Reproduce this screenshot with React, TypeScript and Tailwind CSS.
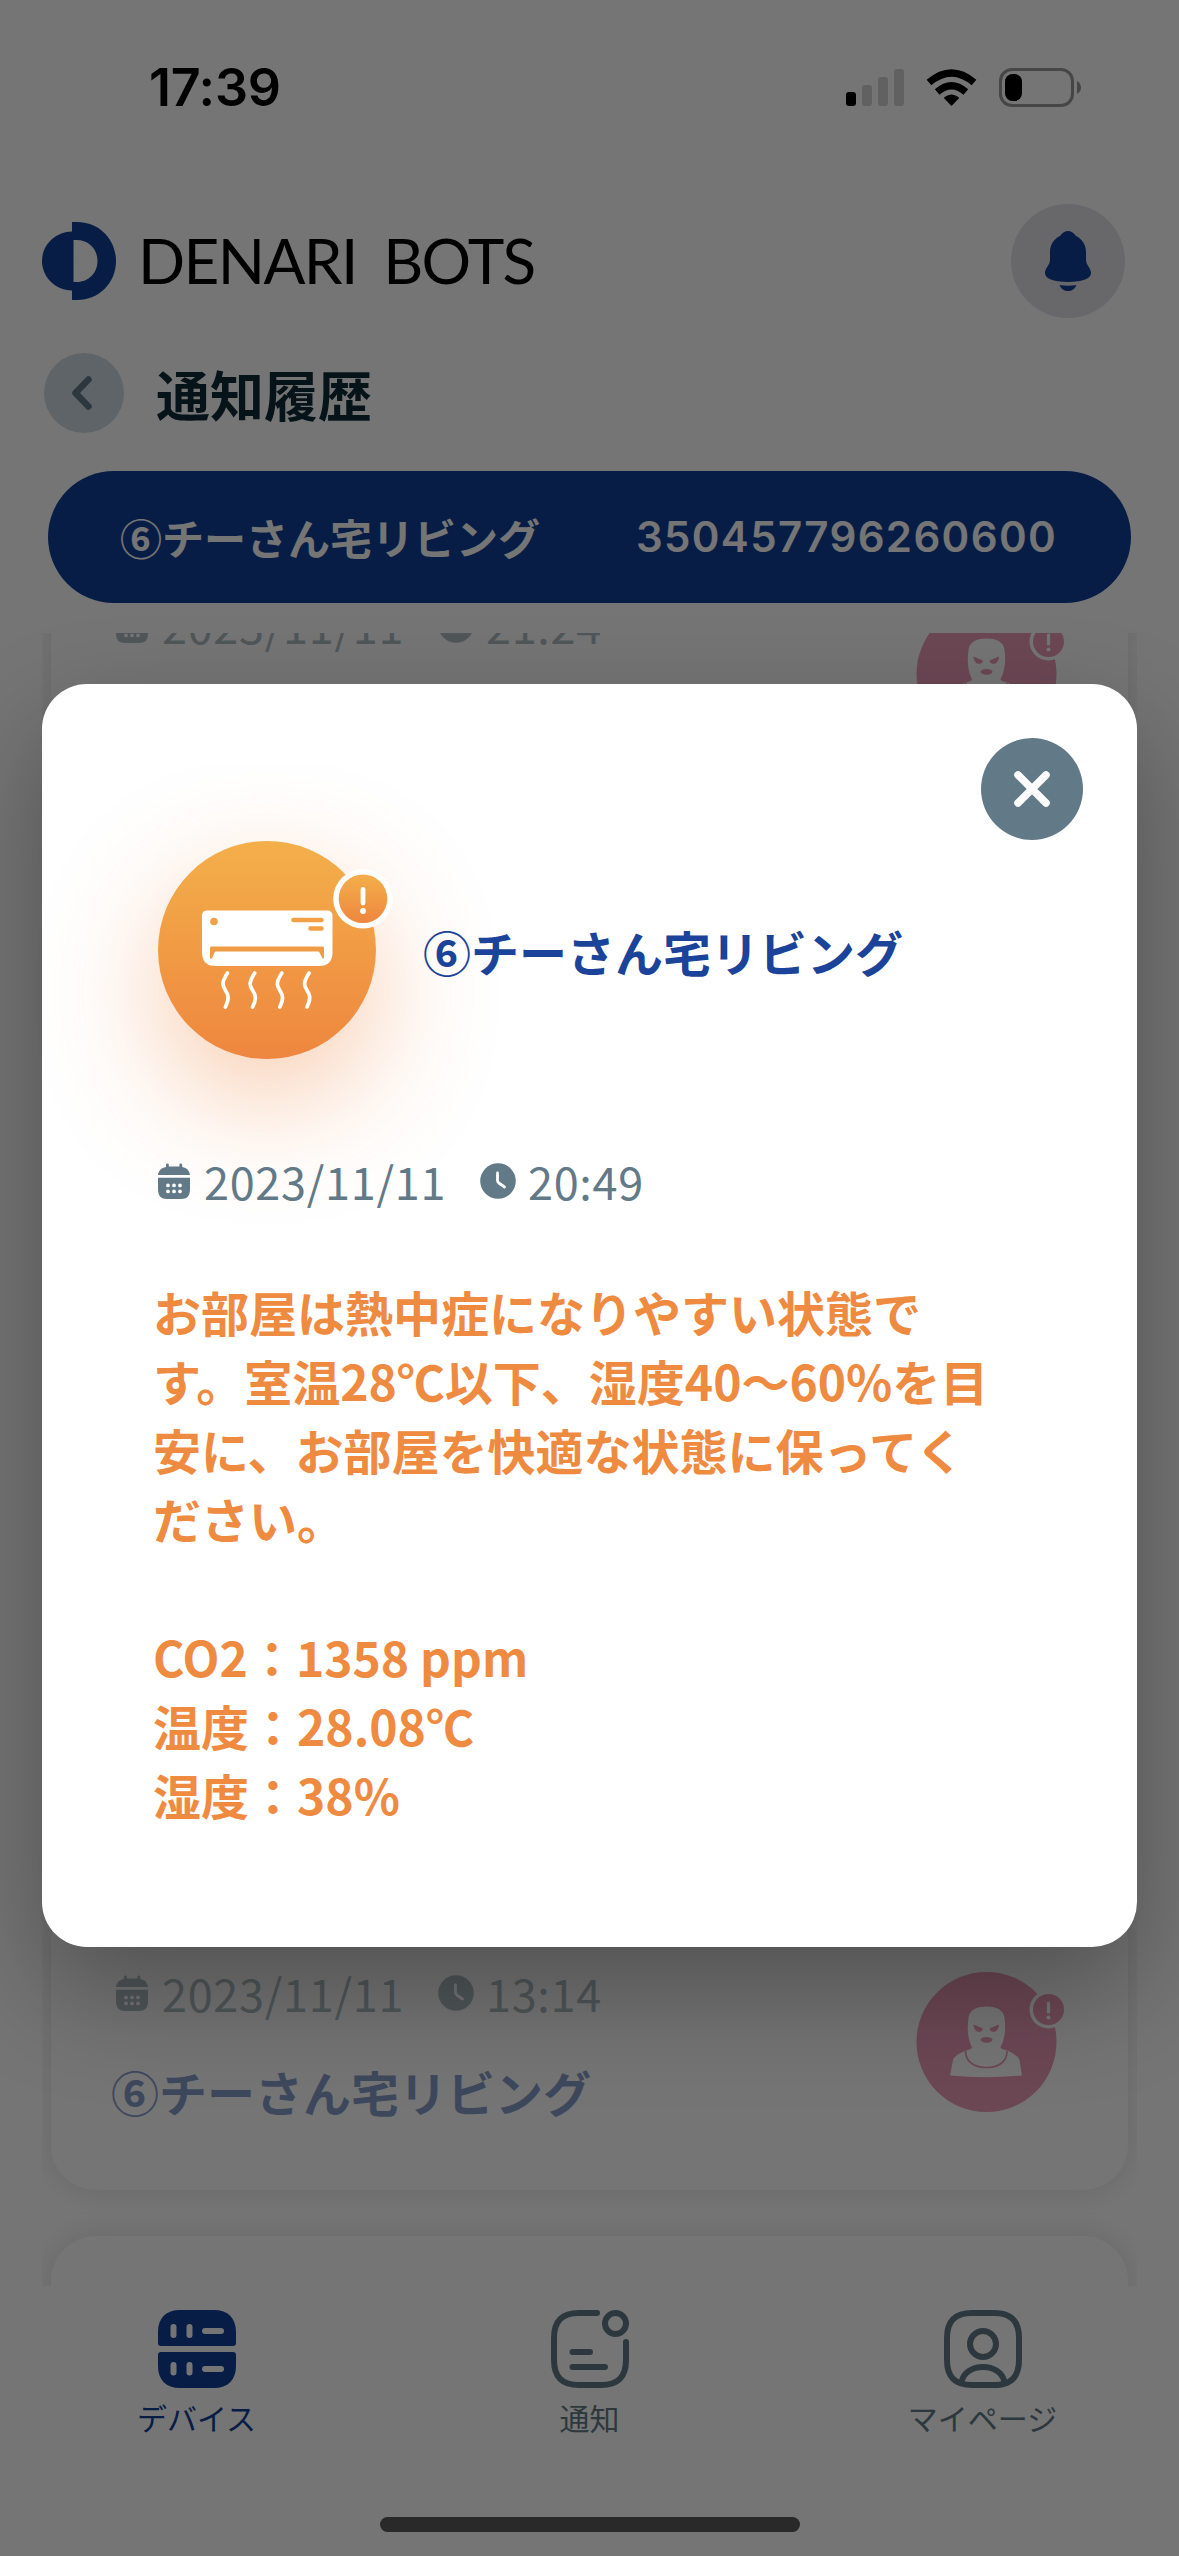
import React from "react";

const CalendarIcon = () => (
  <svg className="h-9 w-8 shrink-0" viewBox="0 0 32 36" fill="#627a88">
    <path d="M8 4V1.8a1.4 1.4 0 0 1 2.8 0V3.6H21.4V1.8a1.4 1.4 0 0 1 2.8 0V4C29 4.8 31.6 8 32 12H0C.4 8 3.200 4.800 8 4Z" />
    <path
      fillRule="evenodd"
      d="M0 14.8H32V26C32 33 29 36 23 36H9C3 36 0 33 0 26ZM10 20.500a1.900 1.900 0 1 0 0 3.800a1.900 1.900 0 1 0 0-3.800ZM16 20.500a1.900 1.900 0 1 0 0 3.800a1.900 1.900 0 1 0 0-3.800ZM22 20.500a1.900 1.900 0 1 0 0 3.800a1.900 1.900 0 1 0 0-3.800ZM10 26.500a1.900 1.900 0 1 0 0 3.800a1.900 1.900 0 1 0 0-3.800ZM16 26.500a1.900 1.900 0 1 0 0 3.800a1.900 1.900 0 1 0 0-3.800ZM22 26.500a1.900 1.900 0 1 0 0 3.800a1.900 1.900 0 1 0 0-3.800Z"
    />
  </svg>
);

const ClockIcon = () => (
  <svg className="size-9 shrink-0" viewBox="0 0 36 36">
    <circle cx="18" cy="18" r="17.800" fill="#627a88" />
    <path d="M17.500 10V17.500Q17.500 19 18.800 20L24.500 24" fill="none" stroke="#fff" strokeWidth="2.800" strokeLinecap="round" />
  </svg>
);

const DateRow = ({ date, time }: { date: string; time: string }) => (
  <div className="flex h-[66px] items-center whitespace-nowrap text-[45px] leading-[66px] tracking-[0.700px] text-[#627a88]">
    <CalendarIcon />
    <span className="-mt-[1px] ml-[14px] w-[276px]">{date}</span>
    <ClockIcon />
    <span className="-mt-[1px] ml-3">{time}</span>
  </div>
);

const IntruderIcon = () => (
  <svg className="h-[140px] w-[151px] overflow-visible" viewBox="0 0 151 140">
    <circle cx="70.500" cy="70" r="70" fill="#d93a72" />
    <g fill="#fff">
      <path d="M70.500 34.500C80 34.500 87.500 37.500 88.500 46C90 57 89 66 84.500 75.500Q85 77 91 78.500C97 81 102 84 103.500 88L106 103.500Q70 107 34 103.500L37 88C38 84 44 81 50 78.500Q56 77 56 75.500C51.500 66 51 57 52.500 46C53.500 37.500 61 34.500 70.500 34.500Z" />
    </g>
    <path d="M49.500 79C49.500 91 60 95.500 70.500 95.500S91 91 91 79" fill="none" stroke="#d93a72" strokeWidth="1.700" />
    <g fill="#d93a72">
      <path d="M57.500 52.500L67 56.500C66 61.500 58 61.500 57.500 52.500ZM83 52.500L73.500 56.500C74.500 61.500 82.500 61.500 83 52.500Z" />
      <ellipse cx="70.500" cy="67.800" rx="6" ry="2.900" />
    </g>
    <circle cx="132.500" cy="37.500" r="19" fill="#fff" />
    <circle cx="132.500" cy="37.500" r="15.500" fill="#d93a72" />
    <path d="M132.500 31V40" stroke="#fff" strokeWidth="3.200" strokeLinecap="round" />
    <circle cx="132.500" cy="45.500" r="2" fill="#fff" />
  </svg>
);

const Card = ({ date, time, name }: { date: string; time: string; name: string }) => (
  <div className="h-[296px] shrink-0 rounded-[45px] bg-white pl-[65px] pr-[61px] shadow-[0_0_30px_rgba(0,0,0,0.12)]">
    <div className="flex h-full items-start justify-between opacity-50">
      <div className="pt-[66px]">
        <DateRow date={date} time={time} />
        <p className="-ml-[5px] mt-[30px] h-[70px] text-[48px] font-bold leading-[70px] text-[#113f98]">{name}</p>
      </div>
      <div className="pt-[78px]">
        <IntruderIcon />
      </div>
    </div>
  </div>
);

const StatusBar = () => (
  <header className="flex h-[174px] items-start justify-between pl-[149px] pr-[98px] pt-[68px]">
    <span className="h-10 font-['Inter'] text-[52px] font-semibold leading-[39px] tracking-[-0.300px]">17:39</span>
    <div className="flex items-start">
      <svg className="h-10 w-[58px]" viewBox="0 0 58 40">
        <rect y="24" width="10" height="14" rx="3" />
        <g fill="#d3d3d3">
          <rect x="16" y="17" width="10" height="21" rx="3" />
          <rect x="32" y="9" width="10" height="29" rx="3" />
          <rect x="48" y="1" width="10" height="37" rx="3" />
        </g>
      </svg>
      <svg className="ml-[22px] h-10 w-[51px]" viewBox="0 0 51 40">
        <path d="M25.500 38L18.300 30.600Q17.800 29.800 18.600 29.100Q25.500 24 32.400 29.100Q33.200 29.800 32.700 30.600Z" />
        <path d="M11.200 24Q25.500 11.500 39.800 24" fill="none" stroke="#000" strokeWidth="7.200" />
        <path d="M3 14.500Q25.500 -4.500 48 14.500" fill="none" stroke="#000" strokeWidth="7.200" />
      </svg>
      <svg className="ml-[22px] h-10 w-[82px]" viewBox="0 0 82 40">
        <rect x="1.500" y="1.500" width="72" height="36" rx="11.500" fill="none" stroke="#999" strokeWidth="3" />
        <rect x="6" y="6" width="17" height="27" rx="7.500" />
        <path d="M78 13Q82 15.500 82 19.500T78 26Z" fill="#999" />
      </svg>
    </div>
  </header>
);

const NavItem = ({ label, active, children }: { label: string; active?: boolean; children: React.ReactNode }) => (
  <div className={active ? "flex flex-1 flex-col items-center text-[#113f98]" : "flex flex-1 flex-col items-center text-[#627a88]"}>
    <svg className="size-[78px]" viewBox="0 0 78 78" fill="none" stroke="currentColor" strokeWidth="6" strokeLinecap="round">
      {children}
    </svg>
    <span className="mt-[7px] text-[30px] leading-[44px]">{label}</span>
  </div>
);

export default function App() {
  return (
    <div className="relative flex h-[2556px] w-[1179px] flex-col overflow-hidden bg-white font-['Noto_Sans_CJK_JP',sans-serif] text-black">
      <StatusBar />

      <div className="flex h-[174px] items-center justify-between pl-[42px] pr-[54px]">
        <div className="flex items-center">
          <svg className="h-[78px] w-[74px]" viewBox="0 0 74 78" fill="#113f98">
            <path
              fillRule="evenodd"
              d="M30 0H35C57 0 74 17 74 39S57 78 35 78H30V68.500C13 68 0 55 0 39S13 10 30 9.500ZM31.500 18V60H35C46.500 60 55.500 51 55.500 39S46.500 18 35 18Z"
            />
          </svg>
          <span className="-mt-[2px] ml-[22px] whitespace-nowrap font-['Lato'] text-[62px] leading-[78px] tracking-[-1.600px] [word-spacing:12px]">DENARI BOTS</span>
        </div>
        <div className="flex size-[114px] items-center justify-center rounded-full bg-[#e2e2e6]">
          <svg className="h-[60px] w-[46px]" viewBox="0 0 46 60" fill="#113f98">
            <path d="M23 0C26 0 28.500 1.500 30.500 4.500C37 8 41 13.500 41 21V29C41 34 46 37 46 42C46 47.500 38 51 23 51S0 47.500 0 42C0 37 5 34 5 29V21C5 13.500 9 8 15.500 4.500C17.500 1.500 20 0 23 0Z" />
            <path d="M14.500 54Q23 55.500 31.500 54Q29 60 23 60T14.500 54Z" />
          </svg>
        </div>
      </div>

      <div className="flex h-[123px] items-start pl-[44px] pt-[5px]">
        <div className="flex size-20 items-center justify-center rounded-full bg-[#cddae0]">
          <svg className="-ml-1 h-[34px] w-5" viewBox="0 0 20 34" fill="none" stroke="#627a88" strokeWidth="6.500" strokeLinecap="round" strokeLinejoin="round">
            <path d="M16.500 3.500L3.500 17L16.500 30.500" />
          </svg>
        </div>
        <h1 className="ml-8 mt-[1px] text-[54px] font-bold leading-[80px] text-[#0f2a38]">通知履歴</h1>
      </div>

      <div className="mx-12 flex h-[132px] shrink-0 items-center justify-between rounded-full bg-[#113f98] pl-[72px] pr-[74px] text-white">
        <span className="text-[42px] font-bold leading-[62px]">⑥チーさん宅リビング</span>
        <span className="-mt-[1px] font-['Inter'] text-[42px] font-semibold leading-[50px] tracking-[1.350px]">350457796260600</span>
      </div>

      <main className="mx-[42px] mt-[30px] flex h-[1653px] shrink-0 flex-col overflow-hidden px-[9px]">
        <div className="-mt-[107px] flex flex-col gap-[46px]">
          <Card date="2023/11/11" time="21:24" name="⑥チーさん宅リビング" />
          <div className="h-[980px] shrink-0" />
          <Card date="2023/11/11" time="13:14" name="⑥チーさん宅リビング" />
          <div className="h-[296px] shrink-0 rounded-[45px] bg-white shadow-[0_0_30px_rgba(0,0,0,0.12)]" />
        </div>
      </main>

      <nav className="flex h-[231px] shrink-0 pt-6">
        <NavItem label="デバイス" active>
          <path
            fill="currentColor"
            stroke="none"
            fillRule="evenodd"
            d="M0 33V22C0 8 8 0 22 0H56C70 0 78 8 78 22V33Q78 36 75 36H3Q0 36 0 33ZM0 45V56C0 70 8 78 22 78H56C70 78 78 70 78 56V45Q78 42 75 42H3Q0 42 0 45Z"
          />
          <path stroke="#fff" d="M15.500 17V25M31.500 17V25M47 21H63M15.500 55V62.500M31.500 55V62.500M47 59H63" />
        </NavItem>
        <NavItem label="通知">
          <path d="M46 3H28C11 3 3 11 3 28V50C3 67 11 75 28 75H50C67 75 75 67 75 50V32" />
          <circle cx="64.500" cy="13.500" r="10.500" />
          <path d="M21.500 42H39M21.500 57H54" />
        </NavItem>
        <NavItem label="マイページ">
          <path d="M28 3H50C67 3 75 11 75 28V50C75 67 67 75 50 75H28C11 75 3 67 3 50V28C3 11 11 3 28 3Z" />
          <circle cx="39" cy="34" r="13" />
          <path d="M17.500 72C19.500 62 29 57 39 57S58.500 62 60.500 72" />
        </NavItem>
      </nav>
      <div className="mx-auto h-[15px] w-[420px] shrink-0 rounded-full bg-[#5b5b5b]" />

      <div className="absolute inset-0 flex flex-col bg-black/54 px-[42px] pt-[684px]">
        <section className="h-[1263px] rounded-[45px] bg-white px-[111px] pt-[54px] shadow-[0_45px_110px_rgba(0,0,0,0.3)]">
          <div className="-mr-[57px] flex justify-end">
            <button className="flex size-[102px] items-center justify-center rounded-full bg-[#627a88]">
              <svg className="size-[38px]" viewBox="0 0 38 38" stroke="#fff" strokeWidth="7.500" strokeLinecap="round">
                <path d="M5 5L33 33M33 5L5 33" />
              </svg>
            </button>
          </div>

          <div className="ml-[5px] flex h-[219px] items-center">
            <div className="size-[218px] shrink-0 rounded-full bg-linear-to-b from-[#f3af4a] to-[#ee863f] shadow-[0_42px_120px_rgba(238,134,63,0.42)]">
              <svg className="size-[218px] overflow-visible" viewBox="0 0 218 218">
                <defs>
                  <linearGradient id="alert" x1="0" y1="0" x2="0" y2="1">
                    <stop offset="0" stopColor="#f3af4a" />
                    <stop offset="1" stopColor="#ee863f" />
                  </linearGradient>
                </defs>
                <path fill="#fff" d="M49 69.500H169Q174.500 69.500 174.500 75V111Q174.500 125 161 125H57.500Q44 125 44 111V75Q44 69.500 49 69.500Z" />
                <g stroke="#f1a146" strokeWidth="4.600" strokeLinecap="round">
                  <path d="M135.500 79H163.500M152.500 87.500H163.500" />
                </g>
                <circle cx="56" cy="80.500" r="3.800" fill="#f1a146" />
                <path fill="#f09c44" d="M53.500 105.500H164.500Q166 105.500 166 107V117.500H164.500L161.500 111.500Q161 110.500 160 110.500H58Q57 110.500 56.500 111.500L54 117.500H52V107Q52 105.500 53.500 105.500Z" />
                <g fill="none" stroke="#fff" strokeWidth="3.700" strokeLinecap="round">
                  <path d="M69.500 132C63 142 64.500 145 67.500 149.500S71.500 158 67.400 166" />
                  <path d="M96.700 132C90.200 142 91.700 145 94.700 149.500S98.700 158 94.600 166" />
                  <path d="M123.900 132C117.400 142 118.900 145 121.900 149.500S125.900 158 121.800 166" />
                  <path d="M151.100 132C144.600 142 146.100 145 149.100 149.500S153.100 158 149 166" />
                </g>
                <circle cx="205" cy="57.700" r="29.800" fill="#fff" />
                <circle cx="205" cy="57.700" r="24.300" fill="url(#alert)" />
                <path d="M205 48.500V62" stroke="#fff" strokeWidth="4.800" strokeLinecap="round" />
                <circle cx="205" cy="70" r="2.900" fill="#fff" />
              </svg>
            </div>
            <h2 className="ml-[47px] mt-[3px] whitespace-nowrap text-[48px] font-bold leading-[70px] text-[#1a4399]">⑥チーさん宅リビング</h2>
          </div>

          <div className="ml-[5px] mt-[89px]">
            <DateRow date="2023/11/11" time="20:49" />
          </div>

          <div className="mt-[63px] whitespace-nowrap text-[48px] font-bold leading-[69px] text-[#ef8a41]">
            <p>
              お部屋は熱中症になりやすい状態で
              <br />
              す。室温28℃以下、湿度40～60%を目
              <br />
              安に、お部屋を快適な状態に保ってく
              <br />
              ださい。
            </p>
            <p className="mt-[69px]">CO2：1358 ppm</p>
            <p>温度：28.08℃</p>
            <p>湿度：38%</p>
          </div>
        </section>
      </div>
    </div>
  );
}
